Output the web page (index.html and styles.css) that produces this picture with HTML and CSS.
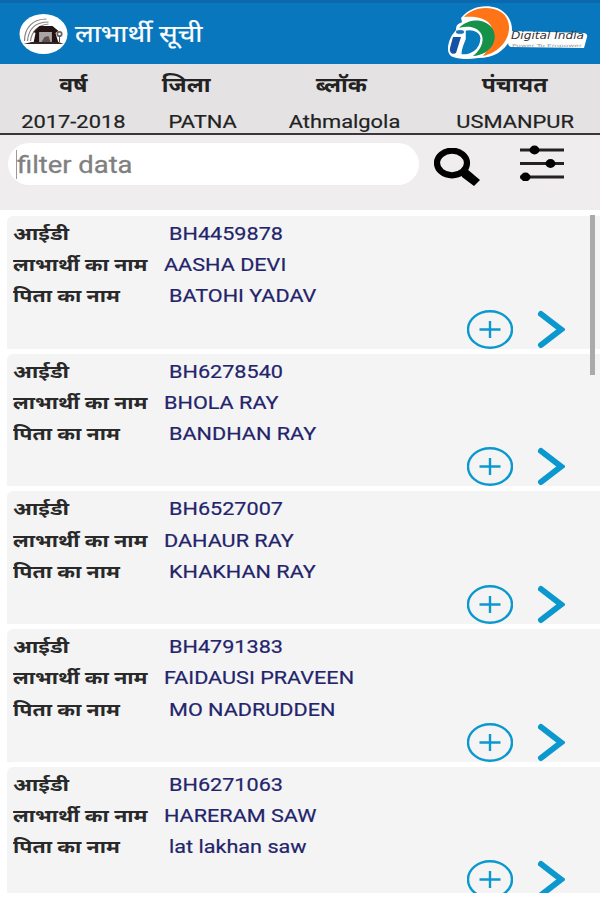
FILE: index.html
```html
<!DOCTYPE html>
<html lang="hi">
<head>
  <meta charset="UTF-8" />
  <title>लाभार्थी सूची</title>
  <meta name="viewport" content="width=device-width, initial-scale=1.0" />
  <link rel="stylesheet" href="styles.css">
</head>
<body>
  <header class="topbar">
    <svg class="emblem" viewBox="0 0 48 40">
      <ellipse cx="24" cy="20" rx="24" ry="20" fill="#fff"/>
      <g fill="none" stroke="#8a8080" stroke-width="1.2">
        <path d="M5 27C5 14 13 5 27 5"/>
        <path d="M8 27C9 15 16 8 29 8"/>
        <path d="M11 27C12 18 18 11 29 10"/>
      </g>
      <path d="M14 29L16 19L14 18L20 12H33L39 17L36 19L39 29H32V18H20V29Z" fill="#241315"/>
      <path d="M20 18h12v11H20z" fill="#aaa4a4"/>
      <path d="M22 28l3-5 4-1 2 6z" fill="#5c5050"/>
      <path d="M4 30L12 28H39L44 30Z" fill="#302425"/>
      <circle cx="40" cy="20" r="2.2" fill="none" stroke="#6d6262" stroke-width="1.8"/>
      <path d="M40 22v6" stroke="#594d4d"/>
    </svg>
    <h1 class="page-title">लाभार्थी सूची</h1>
    <svg class="digital-india" viewBox="0 0 144 56">
      <path d="M14 12C23 1 37 -2 50 2C64 8 68 22 63 34C57 45 47 52 31 52C20 54 9 53 4 50C-1 46 1 37 4 31C5 28 8 26 9 24C9 18 12 18 15 16Z" fill="#fff"/>
      <path d="M60 25Q63 25 67 25L137 27Q141 28 140 31L137 42L64 41Q60 40 61 33Z" fill="#fff"/>
      <path d="M17 11C27 0 44 0 54 6C69 16 63 44 36 50C46 38 49 23 41 16C35 11 26 10 17 11Z" fill="#ff7417"/>
      <path d="M12 22C21 12 38 12 45 22C53 34 43 49 26 50C36 42 38 32 33 26C28 20 19 20 12 22Z" fill="#15914a"/>
      <path d="M18 24C28 22 35 27 34 34C33 43 25 50 14 49C13 44 16 38 18 33Z" fill="#087abe" stroke="#fff" stroke-width="1.5"/>
      <path d="M6 31H14L9 47C6 49 2 47 3 42Z" fill="#1652a3"/>
      <ellipse cx="13" cy="26" rx="4.5" ry="2.4" fill="#1674b8" stroke="#fff"/>
      <text class="logo-name" x="64" y="33" textLength="73" lengthAdjust="spacingAndGlyphs">Digital India</text>
      <text class="logo-tag" x="65" y="40.5" textLength="70" lengthAdjust="spacingAndGlyphs">Power To Empower</text>
    </svg>
  </header>

  <section class="location">
    <div class="place"><b>वर्ष</b><span>2017-2018</span></div>
    <div class="place place-district"><b>जिला</b><span>PATNA</span></div>
    <div class="place place-block"><b>ब्लॉक</b><span>Athmalgola</span></div>
    <div class="place"><b>पंचायत</b><span>USMANPUR</span></div>
  </section>

  <section class="search">
    <div class="search-box"><span class="caret"></span><span class="hint">filter data</span></div>
    <svg class="search-icon" viewBox="0 0 46 38">
      <ellipse cx="18" cy="15" rx="15" ry="12.3" fill="none" stroke="#000" stroke-width="6.2"/>
      <path d="M27 25L33 21L46 32L40 38L28 29Z" fill="#000"/>
    </svg>
    <svg class="filter-icon" viewBox="0 0 44 36">
      <path d="M0 5H44M0 18.5H44M0 32H44" stroke="#252123" stroke-width="2.8"/>
      <ellipse cx="14.5" cy="5" rx="5" ry="4.4"/>
      <ellipse cx="30.5" cy="18.5" rx="5" ry="4.4"/>
      <ellipse cx="5.5" cy="32" rx="5" ry="4.4"/>
    </svg>
  </section>

  <main class="list" id="list"></main>

  <script>
    const people = [
      { id: "BH4459878", name: "AASHA DEVI", father: "BATOHI YADAV" },
      { id: "BH6278540", name: "BHOLA RAY", father: "BANDHAN RAY" },
      { id: "BH6527007", name: "DAHAUR RAY", father: "KHAKHAN RAY" },
      { id: "BH4791383", name: "FAIDAUSI PRAVEEN", father: "MO NADRUDDEN" },
      { id: "BH6271063", name: "HARERAM SAW", father: "lat lakhan saw" }
    ];

    const list = document.getElementById('list');

    people.forEach(person => {
      const card = document.createElement('article');
      card.className = 'card';
      card.innerHTML = `
        <div class="row"><b class="label label-id">आईडी</b><span class="value">${person.id}</span></div>
        <div class="row"><b class="label">लाभार्थी का नाम</b><span class="value value-name">${person.name}</span></div>
        <div class="row"><b class="label">पिता का नाम</b><span class="value">${person.father}</span></div>
        <div class="actions">
          <svg class="add" viewBox="0 0 46 39">
            <ellipse cx="23" cy="19.5" rx="22" ry="18.3"/>
            <path d="M12.5 19.5H33.5M23 11V28"/>
          </svg>
          <svg class="next" viewBox="0 0 28 39"><path d="M4 4L24 19.5L4 35"/></svg>
        </div>`;
      list.appendChild(card);
    });

    const thumb = document.createElement('div');
    thumb.className = 'scroll-thumb';
    list.appendChild(thumb);
  </script>
</body>
</html>
```
FILE: styles.css
```css
* {
  box-sizing: border-box;
}

body {
  margin: 0;
  height: 900px;
  overflow: hidden;
  background: #fff;
  font-family: Roboto, "Noto Sans Devanagari", "Noto Sans", sans-serif;
}

.topbar {
  height: 64px;
  display: flex;
  align-items: center;
  padding: 0 9px 0 19px;
  background: #0877bd;
  border-top: 3px solid #0c68ad;
}

.emblem {
  width: 49px;
  height: 40px;
}

.page-title {
  margin: 0 auto 0 7px;
  font-size: 24px;
  font-weight: 400;
  line-height: 40px;
  color: #fff;
  white-space: nowrap;
  transform: scaleX(1.15);
  transform-origin: left;
  -webkit-text-stroke: 0.2px;
}

.digital-india {
  width: 144px;
  height: 56px;
}

.logo-name {
  font: italic 10px "DejaVu Sans", sans-serif;
  fill: #333;
}

.logo-tag {
  font: 4px "DejaVu Sans", sans-serif;
  fill: #999;
}

.location {
  height: 71px;
  display: grid;
  grid-template-columns: 146px 113px 171px 170px;
  background: #e4e2e3;
  border-bottom: 2px solid #39373a;
}

.place {
  display: flex;
  flex-direction: column;
  align-items: center;
  color: #222;
}

.place b,
.place span {
  height: 36px;
  line-height: 42px;
  font-size: 19px;
  white-space: nowrap;
  transform: scaleX(1.15);
}

.place span {
  line-height: 44px;
  -webkit-text-stroke: 0.2px;
}

.place b {
  font-size: 20px;
}

/* these two headings sit a little left of their values */
.place-district b {
  margin-right: 32px;
}

.place-block b {
  margin-right: 6px;
}

.search {
  height: 75px;
  display: flex;
  align-items: flex-start;
  padding: 8px 0 0 8px;
  background: #efedee;
}

.search-box {
  width: 411px;
  height: 42px;
  display: flex;
  align-items: center;
  padding-left: 8px;
  background: #fff;
  border-radius: 21px;
}

.caret {
  width: 1px;
  height: 29px;
  background: #999;
}

.hint {
  padding-top: 2px;
  font-size: 24px;
  color: #808080;
  white-space: nowrap;
  transform: scaleX(1.14);
  transform-origin: left;
  -webkit-text-stroke: 0.3px;
}

.search-icon {
  width: 46px;
  height: 38px;
  margin: 5px 0 0 15px;
}

.filter-icon {
  width: 44px;
  height: 36px;
  margin: 2px 0 0 40px;
}

.list {
  position: relative;
  height: 683px;
  display: flex;
  flex-direction: column;
  gap: 5.2px;
  padding: 6px 0 0 7px;
  overflow: hidden;
}

.card {
  flex: none;
  height: 132.5px;
  padding: 2px 0 0 6px;
  background: #f4f4f4;
  border-radius: 6px 0 0 0;
}

.row {
  height: 31.2px;
  display: flex;
  align-items: center;
  white-space: nowrap;
}

.label {
  width: 156px;
  font-size: 18px;
  line-height: 31px;
  color: #292929;
  transform: scaleX(1.187);
  transform-origin: left;
}

.label-id {
  transform: scaleX(1.23);
}

.value {
  font-size: 19px;
  line-height: 31px;
  color: #23246b;
  transform: scaleX(1.138);
  transform-origin: left;
  -webkit-text-stroke: 0.2px;
}

.value-name {
  margin-left: -5px;
}

.actions {
  display: flex;
  gap: 24px;
  margin-top: -2px;
  padding-left: 454px;
}

.add,
.next {
  height: 39px;
  fill: none;
  stroke: #0b98ce;
}

.add {
  width: 46px;
  stroke-width: 2.4;
}

.next {
  width: 28px;
  stroke-width: 6;
  stroke-linecap: round;
}

.scroll-thumb {
  position: absolute;
  top: 5px;
  right: 5px;
  width: 5px;
  height: 160px;
  background: #aaa;
}
```
